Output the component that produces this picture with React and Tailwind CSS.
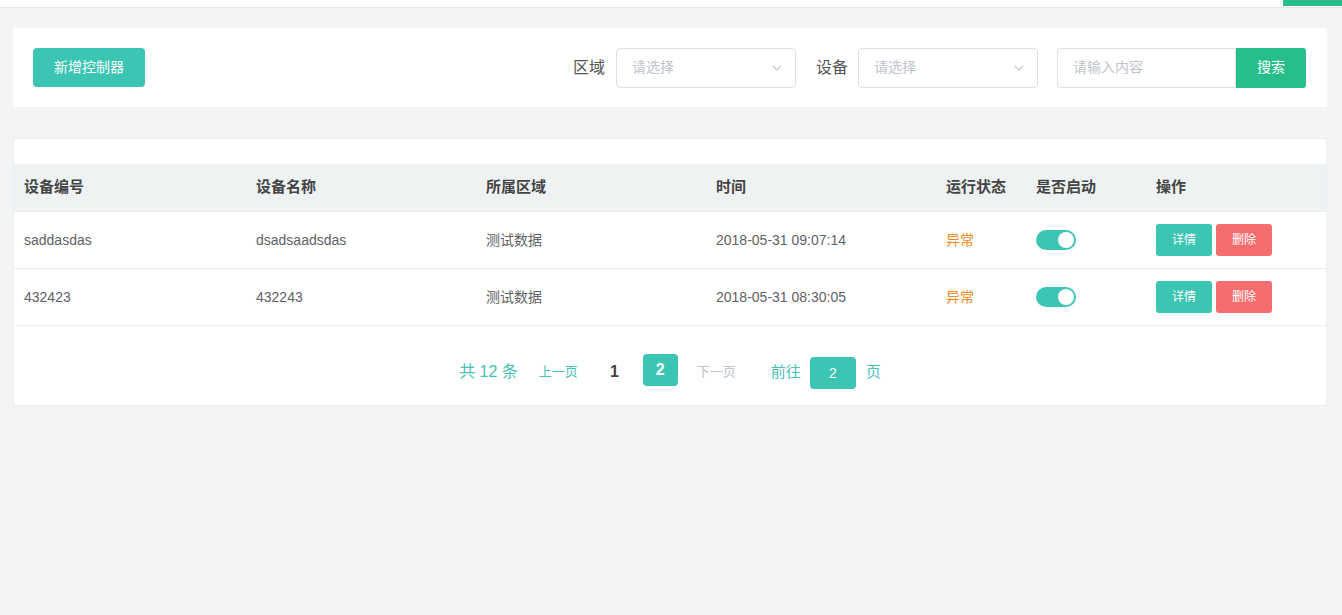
import React from "react";

const F = { fontFamily: '"Liberation Sans", "Noto Sans CJK SC", sans-serif' };

function Chevron() {
  return (
    <svg width="12" height="12" viewBox="0 0 12 12" fill="none">
      <path d="M2 4l4 4 4-4" stroke="#c0c4cc" strokeWidth="1.1" />
    </svg>
  );
}

function Select() {
  return (
    <div className="w-[180px] h-[40px] border border-[#dcdfe6] rounded-[4px] flex items-center justify-between pl-[15px] pr-[12px]">
      <span className="text-[14px] text-[#c0c4cc]">请选择</span>
      <Chevron />
    </div>
  );
}

const rows = [
  ["saddasdas", "dsadsaadsdas", "测试数据", "2018-05-31 09:07:14"],
  ["432423", "432243", "测试数据", "2018-05-31 08:30:05"],
];

const cols = "grid grid-cols-[232px_230px_230px_230px_90px_120px_1fr]";

export default function App() {
  return (
    <div style={F} className="w-[1342px] h-[615px] bg-[#f3f4f5] overflow-hidden">
      <div className="h-[8px] bg-white border-b border-[#e4e6e8] flex justify-end">
        <div className="w-[59px] h-[6px] bg-[#26bf8c]" />
      </div>
      <div className="pl-[13px] pr-[15px] pt-[20px]">
        <div className="bg-white h-[79px] flex items-center justify-between pl-[20px] pr-[21px]">
          <button className="w-[112px] h-[39px] rounded-[4px] bg-[#3cc5b3] text-white text-[14px]">新增控制器</button>
          <div className="flex items-center">
            <span className="text-[16px] text-[#555] mr-[11px]">区域</span>
            <Select />
            <span className="text-[16px] text-[#555] ml-[20px] mr-[10px]">设备</span>
            <Select />
            <div className="ml-[19px] flex h-[40px]">
              <div className="w-[179px] border border-[#dcdfe6] rounded-l-[4px] flex items-center pl-[15px]">
                <span className="text-[14px] text-[#c0c4cc]">请输入内容</span>
              </div>
              <button className="w-[70px] bg-[#26bf8c] text-white text-[14px] rounded-r-[3px]">搜索</button>
            </div>
          </div>
        </div>

        <div className="mt-[31px] bg-white border border-[#ebeef0] h-[268px]">
          <div className="h-[25px]" />
          <div className={`${cols} h-[48px] items-center bg-[#eff2f3] text-[15px] font-bold text-[#444] border-b border-[#e8ebed]`}>
            {["设备编号", "设备名称", "所属区域", "时间", "运行状态", "是否启动", "操作"].map((h) => (
              <div key={h} className="pl-[10px]">{h}</div>
            ))}
          </div>
          {rows.map((r, i) => (
            <div key={i} className={`${cols} h-[57px] items-center border-b border-[#ebeef0] text-[14px] text-[#606266]`}>
              {r.map((c, j) => (
                <div key={j} className="pl-[10px]">{c}</div>
              ))}
              <div className="pl-[10px] text-[#f08a24]">异常</div>
              <div className="pl-[10px]">
                <div className="w-[40px] h-[20px] rounded-full bg-[#3cc5b3] flex items-center justify-end pr-[2px]">
                  <div className="w-[16px] h-[16px] rounded-full bg-white" />
                </div>
              </div>
              <div className="pl-[10px] flex gap-[4px]">
                <button className="w-[56px] h-[32px] rounded-[3px] bg-[#3cc5b3] text-white text-[12px]">详情</button>
                <button className="w-[56px] h-[32px] rounded-[3px] bg-[#f56d6d] text-white text-[12px]">删除</button>
              </div>
            </div>
          ))}
          <div className="pt-[29px] flex items-center justify-center text-[#49c1b4]">
            <span className="text-[16px] mr-[21px]">共 12 条</span>
            <span className="text-[13px] mr-[32px]">上一页</span>
            <span className="text-[16px] font-bold text-[#444] mr-[24px]">1</span>
            <span className="w-[35px] h-[32px] rounded-[4px] bg-[#3cc5b3] text-white text-[16px] font-bold flex items-center justify-center mr-[19px] -mt-[4px]">2</span>
            <span className="text-[13px] text-[#c0c4cc] mr-[35px]">下一页</span>
            <span className="text-[15px] mr-[9px]">前往</span>
            <span className="w-[46px] h-[32px] rounded-[4px] bg-[#3cc5b3] text-white text-[14px] flex items-center justify-center mt-[2px] mr-[10px]">2</span>
            <span className="text-[15px]">页</span>
          </div>
        </div>
      </div>
    </div>
  );
}
